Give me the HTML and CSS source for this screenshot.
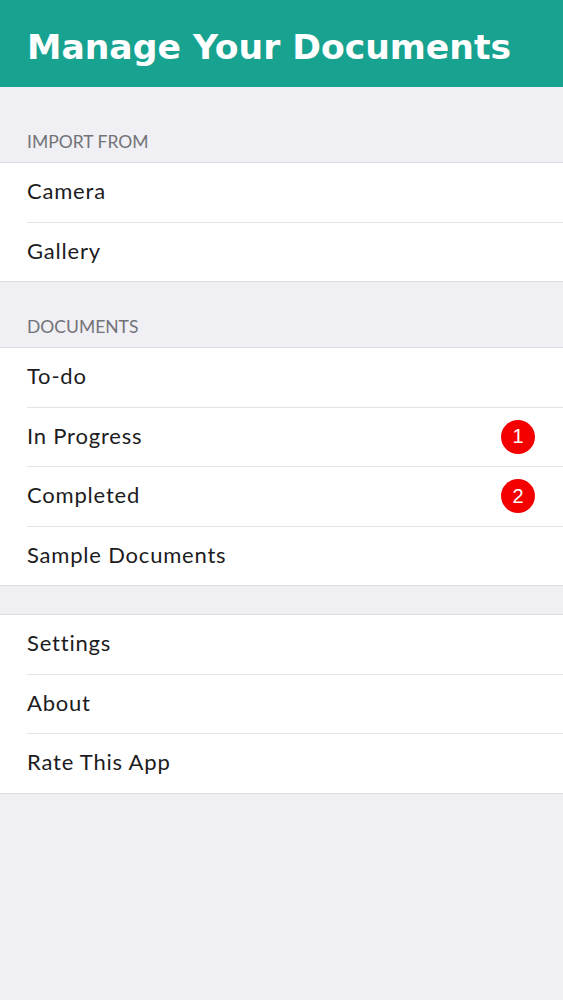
FILE: index.html
```html
<!DOCTYPE html>
<html lang="en">
<head>
    <meta charset="UTF-8">
    <meta name="viewport" content="width=device-width, initial-scale=1.0">
    <title>Manage Your Documents</title>
    <link rel="stylesheet" href="styles.css">
</head>
<body>
    <header class="topbar">
        <h1>Manage Your Documents</h1>
    </header>

    <main class="menu">
        <section class="group group-first">
            <h2 class="group-title">IMPORT FROM</h2>
            <ul class="rows">
                <li class="row"><span class="row-label">Camera</span></li>
                <li class="row"><span class="row-label">Gallery</span></li>
            </ul>
        </section>

        <section class="group">
            <h2 class="group-title">DOCUMENTS</h2>
            <ul class="rows">
                <li class="row"><span class="row-label">To-do</span></li>
                <li class="row"><span class="row-label">In Progress</span><span class="badge">1</span></li>
                <li class="row"><span class="row-label">Completed</span><span class="badge">2</span></li>
                <li class="row"><span class="row-label">Sample Documents</span></li>
            </ul>
        </section>

        <section class="group group-plain">
            <ul class="rows">
                <li class="row"><span class="row-label">Settings</span></li>
                <li class="row"><span class="row-label">About</span></li>
                <li class="row"><span class="row-label">Rate This App</span></li>
            </ul>
        </section>
    </main>
</body>
</html>
```

FILE: styles.css
```css
body {
    margin: 0;
    padding: 0;
    min-height: 100vh;
    background-color: #efeff4;
    font-family: 'Lato', 'Noto Sans', sans-serif;
    color: #1c1c1e;
}

.topbar {
    height: 87px;
    background-color: #17a390;
    display: flex;
    align-items: center;
    padding: 6px 27px 0;
    box-sizing: border-box;
}

.topbar h1 {
    margin: 0;
    color: #ffffff;
    font-family: 'DejaVu Sans', Verdana, sans-serif;
    font-weight: bold;
    font-size: 34.6px;
}

.group-first {
    margin-top: 10px;
}

.group-title {
    margin: 0;
    padding: 35px 27px 10px;
    font-size: 17.5px;
    line-height: 20px;
    font-weight: normal;
    color: #737378;
}

.group-plain {
    padding-top: 28px;
}

.rows {
    list-style: none;
    margin: 0;
    padding: 0;
    background-color: #ffffff;
    border-top: 1px solid #dcdce0;
    border-bottom: 1px solid #dcdce0;
}

.row {
    height: 55.5px;
    margin-left: 27px;
    padding: 0 28px 3px 0;
    display: flex;
    align-items: center;
    justify-content: space-between;
    border-bottom: 1px solid #e4e4e7;
}

.row:last-child {
    border-bottom: none;
}

.row-label {
    font-size: 22px;
    letter-spacing: 0.8px;
}

.badge {
    width: 34px;
    height: 34px;
    margin-top: 3px;
    border-radius: 50%;
    background-color: #f40000;
    color: #ffffff;
    font-family: 'Liberation Sans', Arial, sans-serif;
    font-size: 20px;
    display: flex;
    align-items: center;
    justify-content: center;
}
```
